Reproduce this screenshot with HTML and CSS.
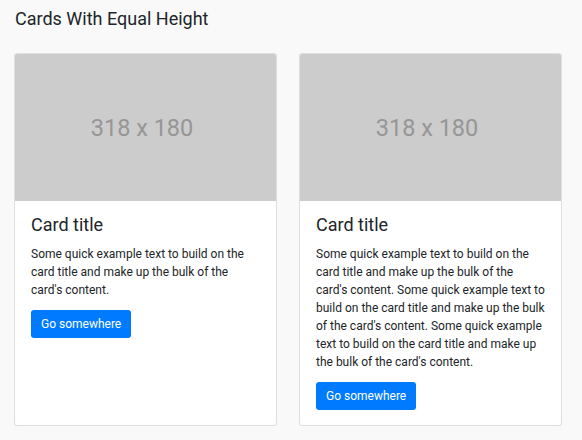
FILE: index.html
```html
<!DOCTYPE html>
<html lang="en">
<head>
    <meta charset="UTF-8">
    <meta name="viewport" content="width=device-width, initial-scale=1.0">
    <title>Cards With Equal Height</title>
    <link rel="stylesheet" href="styles.css">
</head>
<body>

    <h2 class="page-title">Cards With Equal Height</h2>

    <div class="card-row">
        <div class="card">
            <div class="card-img">318 x 180</div>
            <div class="card-body">
                <h5 class="card-title">Card title</h5>
                <p class="card-text">Some quick example text to build on the card title and make up the bulk of the card's content.</p>
                <a href="#" class="btn">Go somewhere</a>
            </div>
        </div>

        <div class="card">
            <div class="card-img">318 x 180</div>
            <div class="card-body">
                <h5 class="card-title">Card title</h5>
                <p class="card-text">Some quick example text to build on the card title and make up the bulk of the card's content. Some quick example text to build on the card title and make up the bulk of the card's content. Some quick example text to build on the card title and make up the bulk of the card's content.</p>
                <a href="#" class="btn">Go somewhere</a>
            </div>
        </div>
    </div>

</body>
</html>
```

FILE: styles.css
```css
body {
    font-family: Roboto, "Liberation Sans", sans-serif;
    margin: 0;
    padding: 8px 20px 0 14px;
    background-color: #f9f9f9;
    color: #212529;
}
.page-title {
    font-size: 18px;
    font-weight: 400;
    line-height: 1.2;
    margin: 0 0 23px 1px;
}
.card-row {
    display: flex;
    gap: 22px;
    align-items: stretch;
}
.card {
    width: 264px;
    box-sizing: border-box;
    background: white;
    border: 1px solid rgba(0, 0, 0, 0.125);
    border-radius: 3px;
    overflow: hidden;
}
.card-img {
    height: 147px;
    background-color: #cccccc;
    color: #969696;
    font-size: 23.5px;
    padding: 2px 7px 0 0;
    box-sizing: border-box;
    display: flex;
    align-items: center;
    justify-content: center;
}
.card-body {
    padding: 13px 16px 15px;
}
.card-title {
    font-size: 18px;
    font-weight: 400;
    line-height: 1.2;
    margin: 0 0 10px 0;
}
.card-text {
    font-size: 12px;
    line-height: 18px;
    margin: 0 0 11px 0;
}
.btn {
    display: inline-block;
    background-color: #007bff;
    color: white;
    text-decoration: none;
    font-size: 12px;
    line-height: 18px;
    padding: 5px 10px;
    border-radius: 3px;
}
```
